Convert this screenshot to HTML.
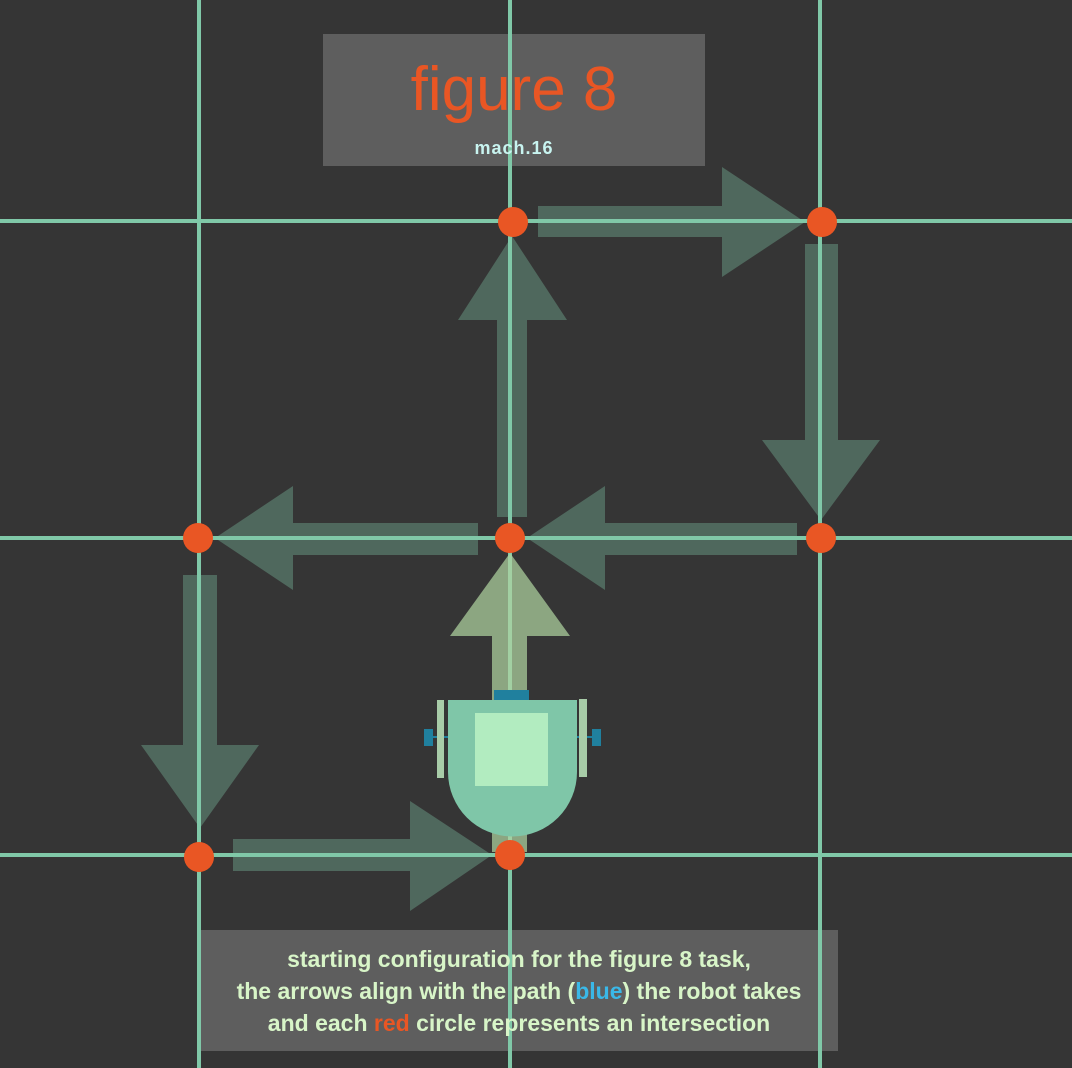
<!DOCTYPE html>
<html><head><style>
html,body{margin:0;padding:0;background:#353535;}
body{width:1072px;height:1068px;overflow:hidden;position:relative;font-family:"Liberation Sans",sans-serif;}
svg{position:absolute;left:0;top:0;}
.t{position:absolute;text-align:center;}
</style></head><body>
<svg width="1072" height="1068" viewBox="0 0 1072 1068">
<rect x="323" y="34" width="382" height="132" fill="#5e5e5e"/>
<rect x="200" y="930" width="638" height="121" fill="#5e5e5e"/>
<g fill="rgba(128,200,168,0.35)">
<polygon points="538,206 722,206 722,167 805,222 722,277 722,237 538,237"/>
<polygon points="805,244 838,244 838,440 880,440 821,520 762,440 805,440"/>
<polygon points="797,523 605,523 605,486 527,538 605,590 605,555 797,555"/>
<polygon points="497,517 497,320 458,320 512,236 567,320 527,320 527,517"/>
<polygon points="478,523 293,523 293,486 215,538 293,590 293,555 478,555"/>
<polygon points="183,575 217,575 217,745 259,745 200,828 141,745 183,745"/>
<polygon points="233,839 410,839 410,801 492,855 410,911 410,871 233,871"/>
</g>
<g stroke="#80c8a8" stroke-width="4">
<line x1="199" y1="0" x2="199" y2="1068"/>
<line x1="510" y1="0" x2="510" y2="1068"/>
<line x1="820" y1="0" x2="820" y2="1068"/>
<line x1="0" y1="221" x2="1072" y2="221"/>
<line x1="0" y1="538" x2="1072" y2="538"/>
<line x1="0" y1="855" x2="1072" y2="855"/>
</g>
<polygon points="510,553 570,636 527,636 527,852 492,852 492,636 450,636" fill="rgba(175,210,160,0.72)"/>
<rect x="494" y="690" width="35" height="10" fill="#20809e"/>
<line x1="424" y1="737" x2="601" y2="737" stroke="#20809e" stroke-width="2"/>
<rect x="424" y="729" width="9" height="17" fill="#20809e"/>
<rect x="592" y="729" width="9" height="17" fill="#20809e"/>
<rect x="437" y="700" width="7" height="78" fill="#a8cca8"/>
<rect x="579" y="699" width="8" height="78" fill="#a8cca8"/>
<path d="M448,700 H577 V772 A64.5,64.5 0 0 1 448,772 Z" fill="#7fc6a8"/>
<rect x="475" y="713" width="73" height="73" fill="#b2ecc0"/>
<g fill="#e95624">
<circle cx="513" cy="222" r="15"/>
<circle cx="822" cy="222" r="15"/>
<circle cx="198" cy="538" r="15"/>
<circle cx="510" cy="538" r="15"/>
<circle cx="821" cy="538" r="15"/>
<circle cx="199" cy="857" r="15"/>
<circle cx="510" cy="855" r="15"/>
</g>
</svg>
<div class="t" style="left:323px;width:382px;top:54px;font-size:62px;line-height:72px;color:#e95624;">figure 8</div>
<div class="t" style="left:323px;width:382px;top:137px;font-size:18px;line-height:22px;color:#c8f4f0;font-weight:bold;letter-spacing:1px;">mach.16</div>
<div class="t" style="left:200px;width:638px;top:943px;font-size:23px;line-height:32px;color:#d8f5c8;font-weight:bold;">starting configuration for the figure 8 task,<br>the arrows align with the path (<span style="color:#3ab8e8">blue</span>) the robot takes<br>and each <span style="color:#e95624">red</span> circle represents an intersection</div>
</body></html>
